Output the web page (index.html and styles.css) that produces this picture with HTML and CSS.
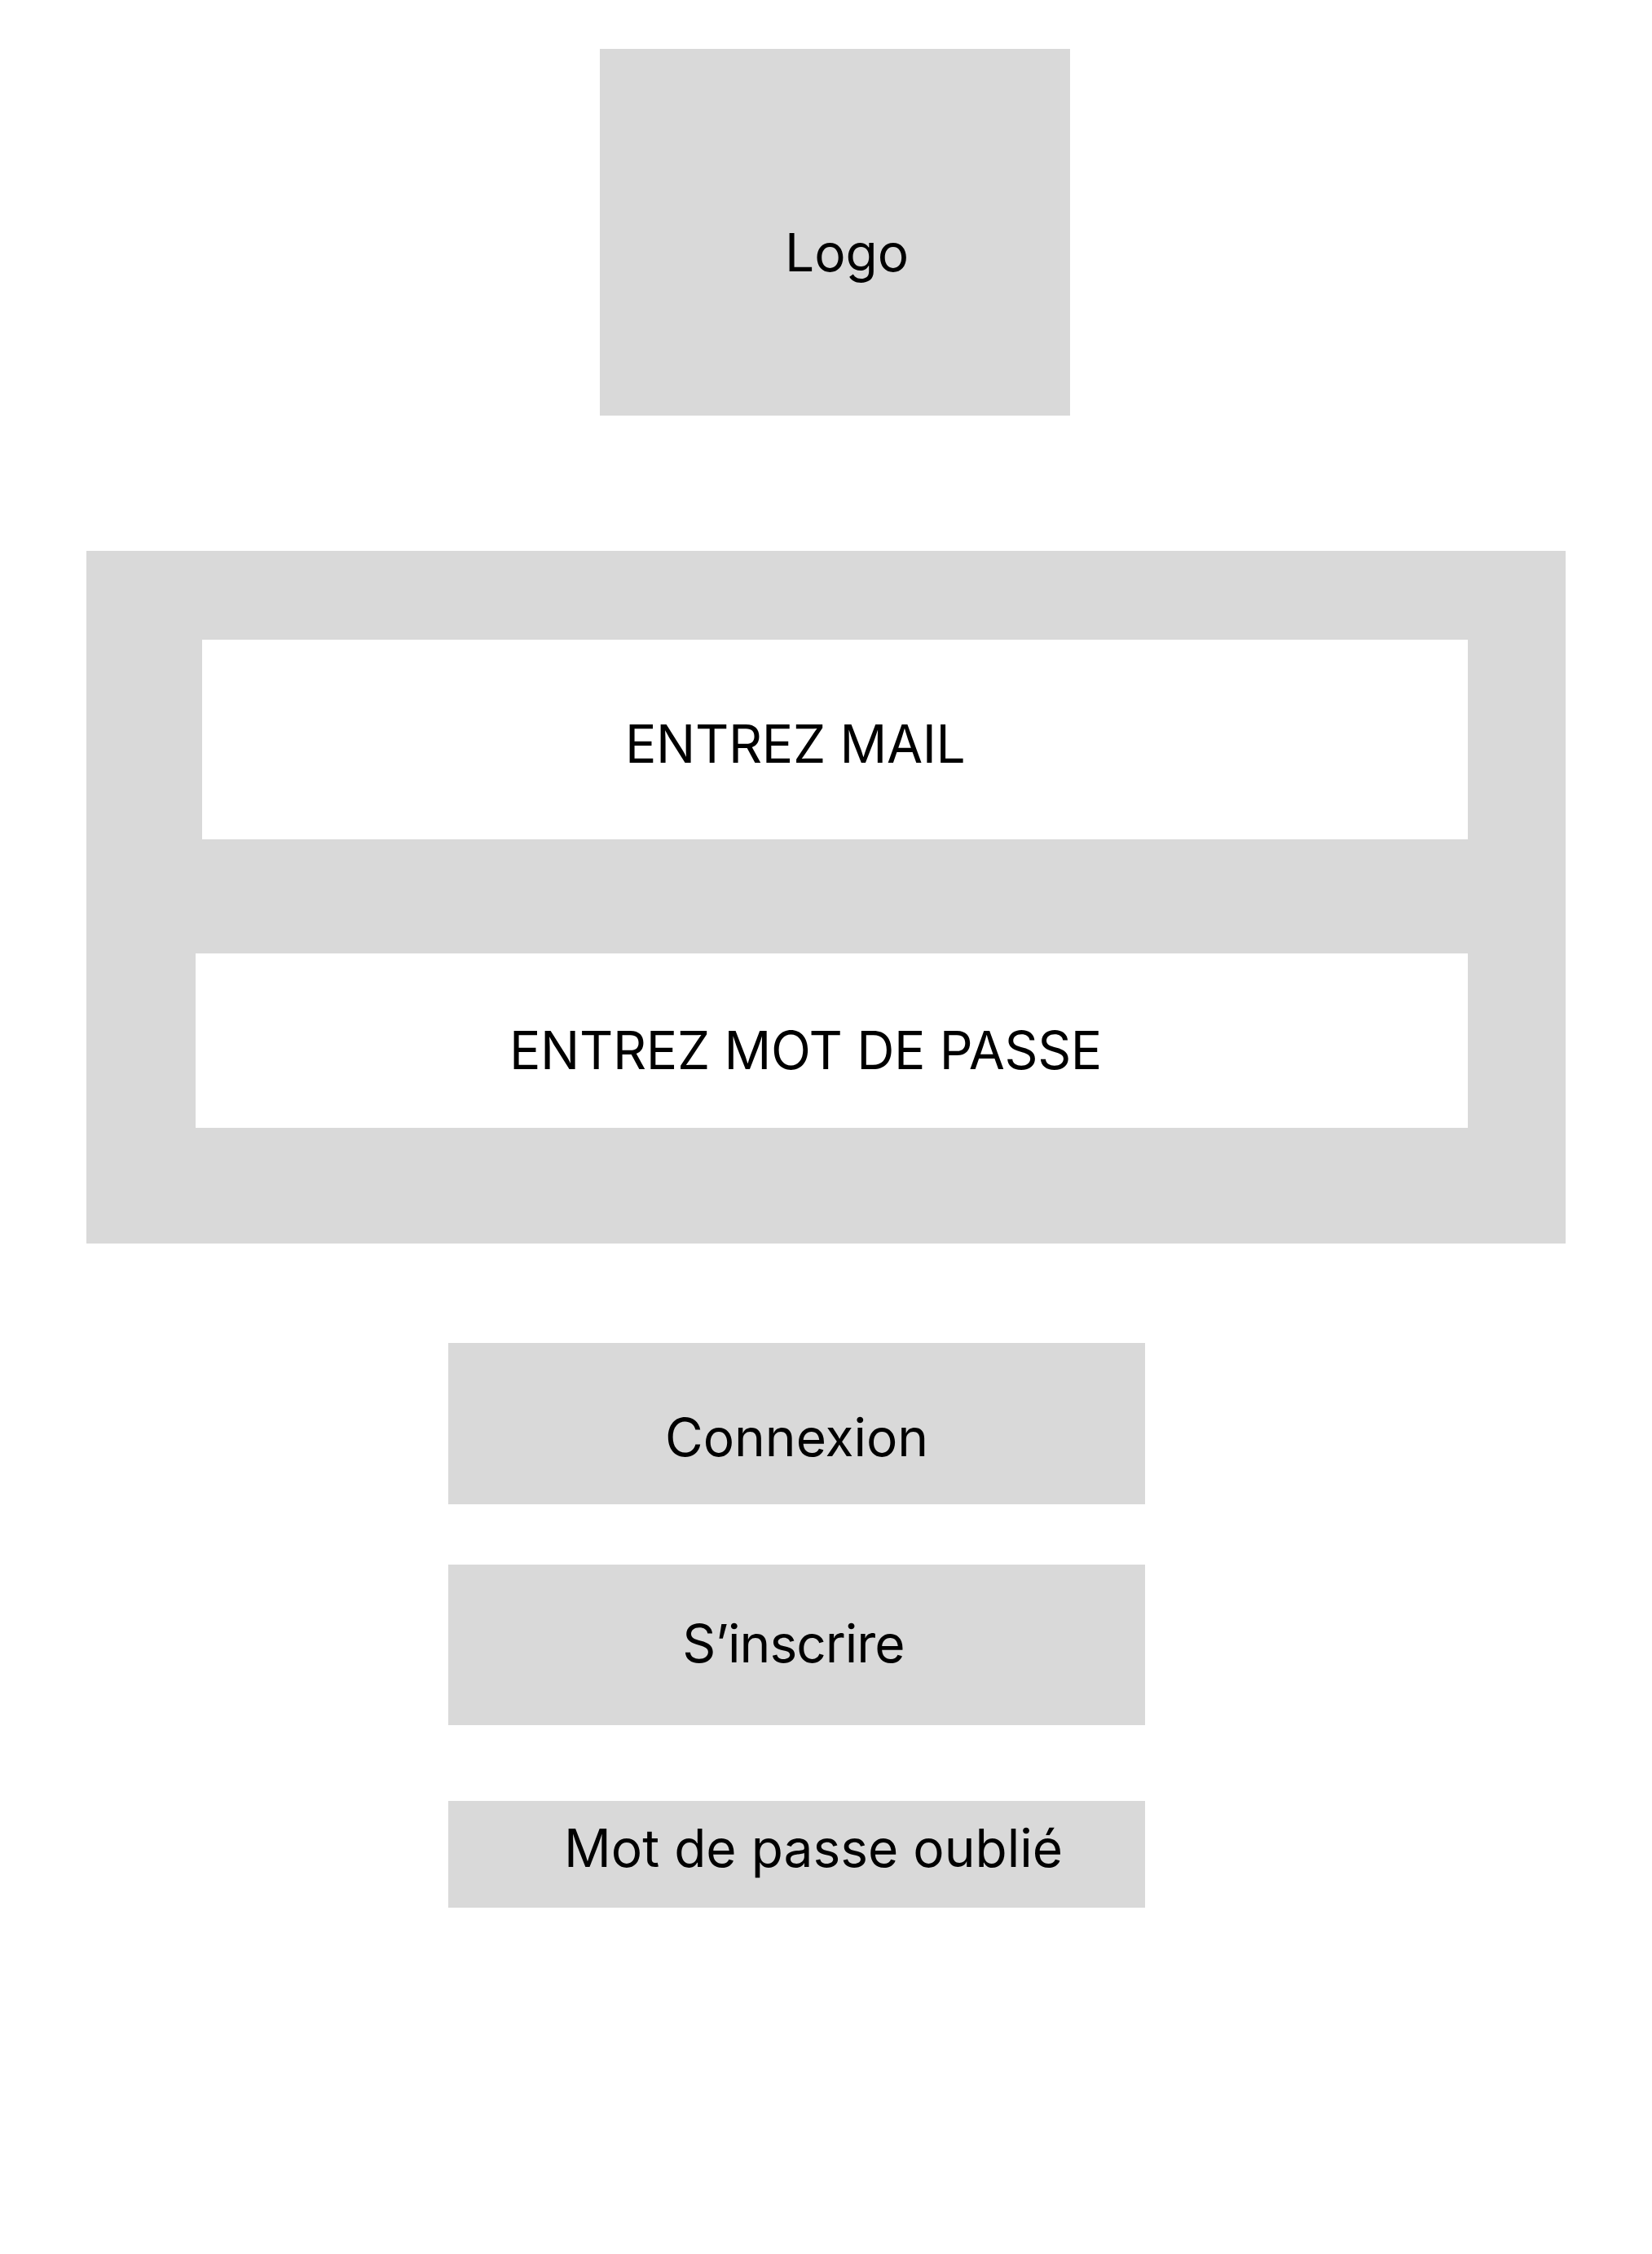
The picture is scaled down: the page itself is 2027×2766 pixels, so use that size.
FILE: index.html
```html
<!DOCTYPE html>
<html lang="fr">
<head>
<meta charset="utf-8">
<title>Connexion</title>
<link rel="stylesheet" href="styles.css">
</head>
<body>
<main class="page">
  <div class="logo"><span class="label">Logo</span></div>
  <form class="panel">
    <div class="field field-mail"><span class="label label-field">ENTREZ MAIL</span></div>
    <div class="field field-pass"><span class="label label-field">ENTREZ MOT DE PASSE</span></div>
  </form>
  <div class="actions">
    <div class="btn btn-login"><span class="label">Connexion</span></div>
    <div class="btn btn-signup"><span class="label label-tight">S’inscrire</span></div>
    <div class="btn btn-forgot"><span class="label">Mot de passe oublié</span></div>
  </div>
</main>
</body>
</html>
```

FILE: styles.css
```css
* { box-sizing: border-box; }
html, body {
  margin: 0;
  padding: 0;
  background: #ffffff;
}
body {
  width: 2027px;
  min-height: 2766px;
  font-family: Inter, "Noto Sans", "Liberation Sans", sans-serif;
  color: #000000;
}
.page {
  display: flex;
  flex-direction: column;
  align-items: flex-start;
  padding-top: 60px;
}
.label {
  display: block;
  font-size: 64px;
  line-height: 64px;
  font-weight: 400;
  white-space: nowrap;
}
.label-field {
  letter-spacing: -0.35px;
}
.label-tight {
  letter-spacing: -1px;
}
.logo {
  margin-left: 736px;
  width: 577px;
  height: 450px;
  background: #d9d9d9;
  padding-top: 218px;
  padding-left: 227px;
}
.panel {
  margin: 166px 0 0 106px;
  width: 1815px;
  height: 850px;
  background: #d9d9d9;
  padding-top: 109px;
  display: flex;
  flex-direction: column;
  align-items: flex-start;
}
.field {
  background: #ffffff;
}
.field-mail {
  margin-left: 142px;
  width: 1553px;
  height: 245px;
  padding-top: 96px;
  padding-left: 519px;
}
.field-pass {
  margin-top: 140px;
  margin-left: 134px;
  width: 1561px;
  height: 214px;
  padding-top: 87px;
  padding-left: 385px;
}
.actions {
  margin: 122px 0 0 550px;
  display: flex;
  flex-direction: column;
  width: 855px;
}
.btn {
  background: #d9d9d9;
  display: flex;
  justify-content: center;
}
.btn-login {
  height: 198px;
  padding-top: 84px;
}
.btn-signup {
  margin-top: 74px;
  height: 197px;
  padding-top: 65px;
  padding-right: 8px;
}
.btn-forgot {
  margin-top: 93px;
  height: 131px;
  padding-top: 26px;
  justify-content: flex-start;
  padding-left: 142px;
}
```
